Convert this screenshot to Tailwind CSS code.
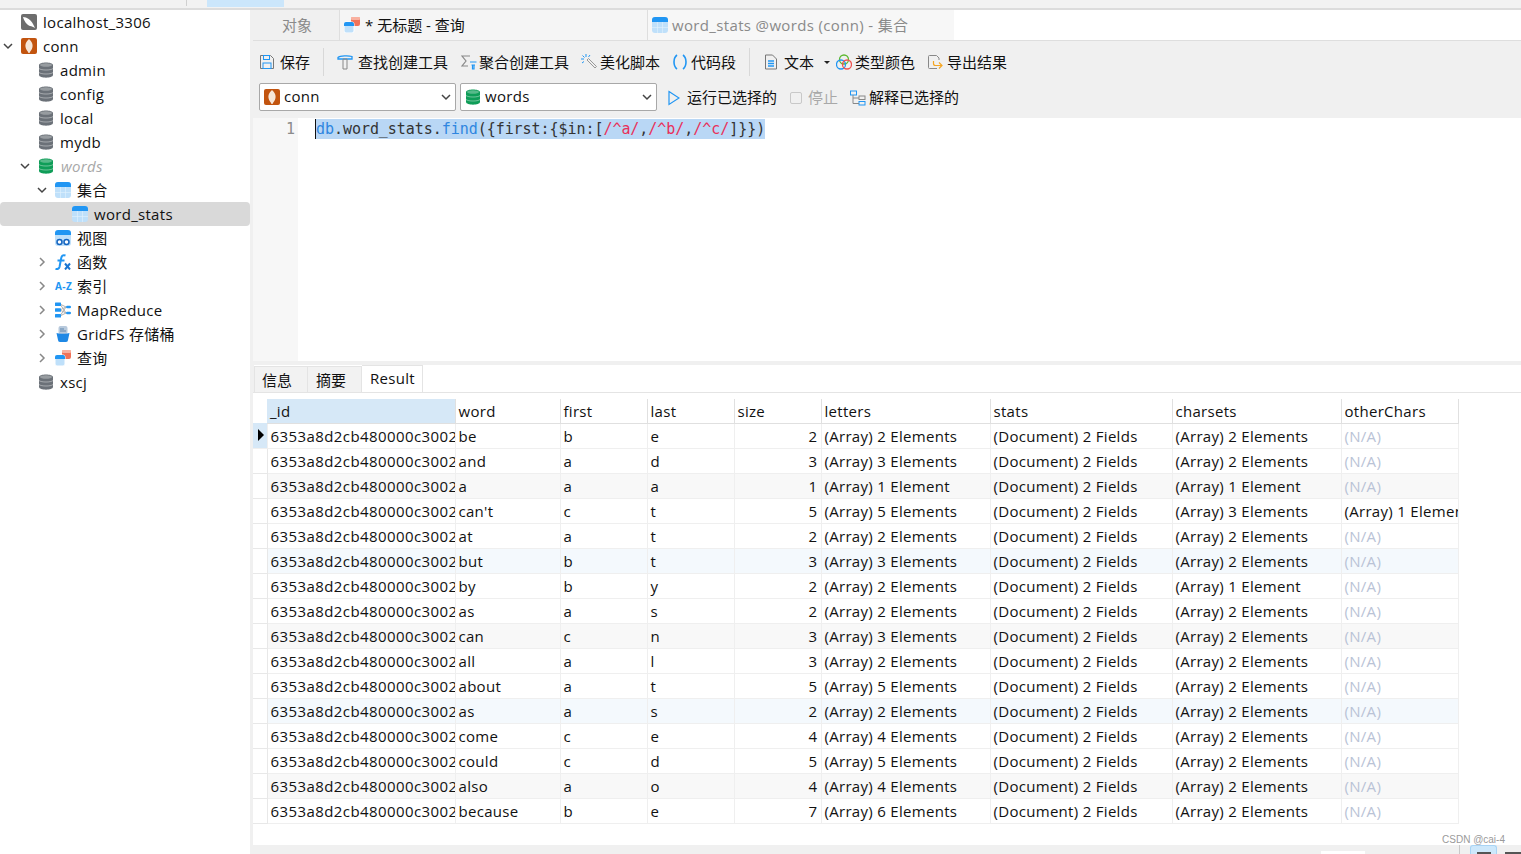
<!DOCTYPE html>
<html lang="zh-CN">
<head>
<meta charset="UTF-8">
<title>无标题 - 查询</title>
<script src="https://cdn.jsdelivr.net/npm/@tailwindcss/browser@4"></script>
</head>
<body class="w-[1521px] h-[854px] overflow-hidden bg-white text-[15px] text-[#111] font-['Open_Sans','Noto_Sans_CJK_SC',sans-serif]">

<svg class="hidden">
  <symbol id="db" viewBox="1 0 14 16"><path d="M1 3c0-3.500 14-3.500 14 0v10c0 3.500-14 3.500-14 0z" fill="currentColor"/><path d="M1 6.500c2 2 12 2 14 0M1 10.500c2 2 12 2 14 0" stroke="#fff" stroke-opacity=".4" fill="none"/><ellipse cx="8" cy="3" rx="6" ry="1.800" fill="#fff" fill-opacity=".3"/></symbol>
  <symbol id="tbl" viewBox="0 0 16 16"><rect width="16" height="16" rx="3" fill="#bfe0fa"/><path d="M0 5V3a3 3 0 0 1 3-3h10a3 3 0 0 1 3 3v2z" fill="#2196f3"/><path d="M5.500 5v11M10.500 5v11M0 10.500h16" stroke="#e3f2fd" stroke-width=".6"/></symbol>
  <symbol id="mongo" viewBox="0 0 16 16"><rect width="16" height="16" rx="2" fill="#c2540f"/><path d="M8 1c3 3 4 5 3.500 8S9 13 8.500 15h-1C7 13 5 12 4.500 9S5 4 8 1z" fill="#f6e6d8"/></symbol>
  <symbol id="qry" viewBox="0 0 16 16"><rect x="7" width="9" height="9" rx="2" fill="#f1735a"/><rect x="7" width="9" height="3" rx="1" fill="#f9b09f"/><rect y="5" width="10" height="11" rx="2" fill="#bfe0fa" stroke="#fff"/><path d="M0 9V7a2 2 0 0 1 2-2h6a2 2 0 0 1 2 2v2z" fill="#2196f3"/></symbol>
  <symbol id="chev-d" viewBox="0 0 12 12"><path d="M2 4l4 4 4-4" fill="none" stroke="#444" stroke-width="1.500"/></symbol>
  <symbol id="chev-r" viewBox="0 0 12 12"><path d="M4 2l4 4-4 4" fill="none" stroke="#888" stroke-width="1.500"/></symbol>
</svg>

<!-- top strip -->
<div class="h-[10px] bg-[#f2f2f2] border-b-2 border-[#dcdcdc] flex">
  <div class="ml-[186px] w-px h-[6px] bg-[#d0d0d0]"></div>
  <div class="ml-[20px] w-[77px] h-[7px] bg-[#cbe6fb]"></div>
</div>

<div class="flex h-[844px]">
  <!-- sidebar tree -->
  <aside class="w-[250px] shrink-0 bg-white tracking-[0.3px]">
    <div class="h-6 flex items-center pl-[21px] gap-[6px]"><svg class="w-4 h-4" viewBox="0 0 16 16"><rect width="16" height="16" rx="2" fill="#6d6d6d"/><path d="M2 3c4 0 8 3 10 7l2 4c-2-1-3-2-5-2-3-1-6-5-7-9z" fill="#fff"/></svg><span>localhost_3306</span></div>
    <div class="h-6 flex items-center pl-[2px] gap-[6px]"><svg class="w-3 h-3"><use href="#chev-d"/></svg><svg class="w-4 h-4 ml-[1px]"><use href="#mongo"/></svg><span>conn</span></div>
    <div class="h-6 flex items-center pl-[39px] gap-[7px]"><svg class="w-[14px] h-4 text-[#6b7178]"><use href="#db"/></svg><span>admin</span></div>
    <div class="h-6 flex items-center pl-[39px] gap-[7px]"><svg class="w-[14px] h-4 text-[#6b7178]"><use href="#db"/></svg><span>config</span></div>
    <div class="h-6 flex items-center pl-[39px] gap-[7px]"><svg class="w-[14px] h-4 text-[#6b7178]"><use href="#db"/></svg><span>local</span></div>
    <div class="h-6 flex items-center pl-[39px] gap-[7px]"><svg class="w-[14px] h-4 text-[#6b7178]"><use href="#db"/></svg><span>mydb</span></div>
    <div class="h-6 flex items-center pl-[19px] gap-[8px]"><svg class="w-3 h-3"><use href="#chev-d"/></svg><svg class="w-[14px] h-4 text-[#0f9d58]"><use href="#db"/></svg><span class="italic text-[#a8a8a8]">words</span></div>
    <div class="h-6 flex items-center pl-[36px] gap-[6px]"><svg class="w-3 h-3"><use href="#chev-d"/></svg><svg class="w-4 h-4 ml-[1px]"><use href="#tbl"/></svg><span>集合</span></div>
    <div class="h-6 flex items-center pl-[72px] gap-[6px] bg-[#d9d9d9] rounded-sm"><svg class="w-4 h-4"><use href="#tbl"/></svg><span>word_stats</span></div>
    <div class="h-6 flex items-center pl-[55px] gap-[6px]"><svg class="w-4 h-4" viewBox="0 0 16 16"><path d="M0 5V3a3 3 0 0 1 3-3h10a3 3 0 0 1 3 3v2z" fill="#2196f3"/><path d="M0 5h16v8a3 3 0 0 1-3 3H3a3 3 0 0 1-3-3z" fill="#bfe0fa"/><circle cx="4.500" cy="12" r="2.500" fill="#fff" stroke="#1565c0" stroke-width="1.500"/><circle cx="11.500" cy="12" r="2.500" fill="#fff" stroke="#1565c0" stroke-width="1.500"/></svg><span>视图</span></div>
    <div class="h-6 flex items-center pl-[36px] gap-[6px]"><svg class="w-3 h-3"><use href="#chev-r"/></svg><svg class="w-4 h-4 ml-[1px]" viewBox="0 0 16 16"><path d="M10.500 1.500C7.500 .5 6.500 2 6 5L4.500 13C4 15 3 15.500 .5 15M2.500 6.500h7" fill="none" stroke="#2196f3" stroke-width="2"/><path d="M10 9.500l5 6M15 9.500l-5 6" stroke="#1976d2" stroke-width="2"/></svg><span>函数</span></div>
    <div class="h-6 flex items-center pl-[36px] gap-[6px]"><svg class="w-3 h-3"><use href="#chev-r"/></svg><span class="ml-[1px] w-4 text-[10px] font-bold text-[#2196f3] tracking-[0.4px] leading-none whitespace-nowrap">A-Z</span><span>索引</span></div>
    <div class="h-6 flex items-center pl-[36px] gap-[6px]"><svg class="w-3 h-3"><use href="#chev-r"/></svg><svg class="w-4 h-4 ml-[1px]" viewBox="0 0 16 16"><path d="M5 2l6 3M5 8l6-3M5 14l6-3M5 8l6 3M5 2l6 9M5 14l6-9" stroke="#b0b0b0" fill="none"/><rect y=".5" width="6" height="3.500" rx=".5" fill="#2196f3"/><rect y="6.200" width="6" height="3.500" rx=".5" fill="#2196f3"/><rect y="12" width="6" height="3.500" rx=".5" fill="#2196f3"/><rect x="11" y="3.800" width="5" height="2.500" rx="1.200" fill="#2196f3"/><rect x="11" y="9.800" width="5" height="2.500" rx="1.200" fill="#2196f3"/></svg><span>MapReduce</span></div>
    <div class="h-6 flex items-center pl-[36px] gap-[6px]"><svg class="w-3 h-3"><use href="#chev-r"/></svg><svg class="w-4 h-4 ml-[1px]" viewBox="0 0 16 16"><rect x="3.500" y="0" width="9" height="8" rx="2" fill="#b7c9dc"/><path d="M5 3h4M5 5h6" stroke="#5f86ad"/><path d="M1.500 7c2 1 11 1 13 0l-1.500 7a2 2 0 0 1-2 2H5a2 2 0 0 1-2-2z" fill="#1e88e5"/></svg><span>GridFS 存储桶</span></div>
    <div class="h-6 flex items-center pl-[36px] gap-[6px]"><svg class="w-3 h-3"><use href="#chev-r"/></svg><svg class="w-4 h-4 ml-[1px]"><use href="#qry"/></svg><span>查询</span></div>
    <div class="h-6 flex items-center pl-[39px] gap-[7px]"><svg class="w-[14px] h-4 text-[#6b7178]"><use href="#db"/></svg><span>xscj</span></div>
  </aside>

  <!-- main -->
  <main class="flex-1 min-w-0 flex flex-col bg-[#f0f0f0] pl-[3px]">
    <!-- tabs -->
    <div class="h-[31px] flex bg-white border-b border-[#dedede]">
      <div class="w-[87px] bg-[#f0f0f0] flex items-center justify-center pl-[2px] text-[#8a8a8a] border-r border-[#dedede]">对象</div>
      <div class="w-[308px] bg-[#f5f5f5] flex items-center pl-[4px] gap-[5px] border-r border-[#dedede]"><svg class="w-4 h-4"><use href="#qry"/></svg><span>* 无标题 - 查询</span></div>
      <div class="w-[306px] bg-[#f7f7f7] flex items-center pl-[4px] gap-[4px] text-[#8a8a8a] tracking-[0.35px]"><svg class="w-4 h-4"><use href="#tbl"/></svg><span>word_stats @words (conn) - 集合</span></div>
    </div>

    <!-- toolbar row 1 -->
    <div class="h-[42px] flex items-center whitespace-nowrap">
      <div class="flex items-center gap-[5px] ml-[6px]"><svg class="w-4 h-4" viewBox="0 0 16 16" fill="none" stroke="#777"><path d="M1.500 1.500h10l3 3v10h-13z"/><rect x="4.500" y="1.500" width="6" height="4" stroke="#2196f3"/><rect x="4" y="9" width="8" height="5.500" stroke="#2196f3"/></svg><span>保存</span></div>
      <div class="w-px h-7 bg-[#d8d8d8] mx-[13px]"></div>
      <div class="flex items-center gap-[5px]"><svg class="w-4 h-4" viewBox="0 0 16 16" fill="none"><path d="M1 3.500C3 1.500 12 1.500 15 2.500V5H1z" stroke="#2196f3" stroke-width="1.300"/><path d="M6 5h4v10H6z" stroke="#888"/></svg><span>查找创建工具</span></div>
      <div class="flex items-center gap-[2px] ml-[13px]"><svg class="w-4 h-4" viewBox="0 0 16 16" fill="none"><path d="M9 2H1l4 5-4 5h6" stroke="#888" stroke-width="1.200"/><path d="M9 8h6.500M10.500 11h3.500M11.500 11v4h1.500v-4" stroke="#2196f3" stroke-width="1.200"/></svg><span>聚合创建工具</span></div>
      <div class="flex items-center gap-[3px] ml-[12px]"><svg class="w-4 h-4" viewBox="0 0 16 16" fill="none"><path d="M6 6l8 8 1.500-1.500-8-8z" stroke="#999"/><path d="M5 0v3M0 5h3M1.500 1.500l2 2M9 1L7.500 3M1 9l2-1.500" stroke="#2196f3"/></svg><span>美化脚本</span></div>
      <div class="flex items-center gap-[3px] ml-[12px]"><svg class="w-4 h-4" viewBox="0 0 16 16" fill="none" stroke="#2196f3" stroke-width="1.600"><path d="M5 1C1 4 1 12 5 15M11 1c4 3 4 11 0 14"/></svg><span>代码段</span></div>
      <div class="w-px h-7 bg-[#d8d8d8] mx-[13px]"></div>
      <div class="flex items-center gap-[5px]"><svg class="w-4 h-4" viewBox="0 0 16 16" fill="none"><path d="M2.500 1h7l4 4v10h-11z" stroke="#777"/><path d="M5 7h6M5 9.500h6M5 12h6" stroke="#2196f3" stroke-width="1.300"/></svg><span>文本</span><span class="ml-[5px] w-0 h-0 border-x-[3px] border-x-transparent border-t-[3px] border-t-[#222]"></span></div>
      <div class="flex items-center gap-[3px] ml-[6px]"><svg class="w-4 h-4" viewBox="0 0 16 16" fill="none"><circle cx="8" cy="5.500" r="4.500" stroke="#5cb82e" stroke-width="1.300"/><circle cx="5" cy="10.500" r="4.500" stroke="#2196f3" stroke-width="1.300"/><circle cx="11" cy="10.500" r="4.500" stroke="#ef5350" stroke-width="1.300"/></svg><span>类型颜色</span></div>
      <div class="flex items-center gap-[4px] ml-[12px]"><svg class="w-4 h-4" viewBox="0 0 16 16" fill="none"><path d="M10 14.500H2.500a1 1 0 0 1-1-1V2.500a1 1 0 0 1 1-1h7l2.500 2.500v2" stroke="#888"/><path d="M6.500 7v2.500a2 2 0 0 0 2 2h6M12 8.500l3 3-3 3" stroke="#f5a623" stroke-width="1.200"/></svg><span>导出结果</span></div>
    </div>

    <!-- toolbar row 2 -->
    <div class="h-[35px] flex items-start whitespace-nowrap">
      <div class="ml-[6px] w-[197px] h-7 bg-white border border-[#a8a8a8] rounded-[2px] flex items-center pl-[4px] gap-[4px] tracking-[0.3px]"><svg class="w-4 h-4"><use href="#mongo"/></svg><span class="flex-1 pb-[1px]">conn</span><svg class="w-3 h-3 mr-[3px]"><use href="#chev-d"/></svg></div>
      <div class="ml-[4px] w-[197px] h-7 bg-white border border-[#a8a8a8] rounded-[2px] flex items-center pl-[5px] gap-[5px] tracking-[0.3px]"><svg class="w-[14px] h-4 text-[#0f9d58]"><use href="#db"/></svg><span class="flex-1 pb-[1px]">words</span><svg class="w-3 h-3 mr-[3px]"><use href="#chev-d"/></svg></div>
      <div class="h-7 flex items-center ml-[11px] gap-[7px] pt-[1px]"><svg class="w-3 h-4" viewBox="0 0 12 16" fill="none"><path d="M1 1.500l10 6.500-10 6.500z" stroke="#2196f3" stroke-width="1.200"/></svg><span>运行已选择的</span></div>
      <div class="h-7 flex items-center ml-[13px] gap-[6px] pt-[1px] text-[#a8a8a8]"><span class="w-3 h-3 border border-[#c8c8c8] rounded-[2px]"></span><span>停止</span></div>
      <div class="h-7 flex items-center ml-[12px] gap-[3px] pt-[1px]"><svg class="w-4 h-4" viewBox="0 0 16 16" fill="none"><rect x=".5" y="1" width="6" height="4" stroke="#2196f3"/><rect x="9" y="6" width="6" height="3.500" stroke="#888"/><rect x="9" y="11.500" width="6" height="3.500" stroke="#2196f3"/><path d="M3 5v8.500h6M3 8h6" stroke="#888"/></svg><span>解释已选择的</span></div>
    </div>

    <!-- editor -->
    <div class="h-[243px] flex bg-white">
      <div class="w-[45px] bg-[#f7f7f7] pt-[1px] pr-[3px] text-right text-[#8c8c8c] leading-[20px] font-['DejaVu_Sans_Mono',monospace] text-[15px]">1</div>
      <div class="pl-[17px] pt-[1px]">
        <div class="h-5 bg-[#b9d7f5] border-l border-[#111] leading-5 whitespace-pre font-['DejaVu_Sans_Mono',monospace] text-[15px] tracking-[-0.05px] text-[#333]"><span class="text-[#2f86e0]">db</span>.word_stats.<span class="text-[#2f86e0]">find</span>({first:{$in:[<span class="text-[#e8305a]">/^a/</span>,<span class="text-[#e8305a]">/^b/</span>,<span class="text-[#e8305a]">/^c/</span>]}})</div>
      </div>
    </div>

    <!-- result tabs -->
    <div class="h-[4px]"></div>
    <div class="h-[28px] flex bg-white border-b border-[#e4e4e4] items-end">
      <div class="w-[1px] h-full bg-[#f0f0f0]"></div>
      <div class="w-[54px] h-[26px] flex items-center pl-[7px] pt-[1px] bg-[#f2f2f2] border border-b-0 border-[#e4e4e4]">信息</div>
      <div class="w-[54px] h-[26px] flex items-center pl-[8px] pt-[1px] bg-[#f2f2f2] border-t border-r border-[#e4e4e4]">摘要</div>
      <div class="w-[61px] h-[27px] flex items-center pl-[8px] pb-[2px] bg-white border-t border-r border-[#e4e4e4] tracking-[0.3px]">Result</div>
    </div>

    <!-- result grid -->
    <div class="flex-1 min-h-0 bg-white pt-[6px] relative">
      <table class="table-fixed border-collapse w-[1205px] whitespace-nowrap tracking-[0.3px]">
        <colgroup>
          <col class="w-[14px]"><col class="w-[188px]"><col class="w-[105px]"><col class="w-[87px]"><col class="w-[87px]"><col class="w-[87px]"><col class="w-[169px]"><col class="w-[182px]"><col class="w-[169px]"><col class="w-[117px]">
        </colgroup>
        <thead>
          <tr class="h-[24px] text-left">
            <th class="p-0"></th>
            <th class="p-0 pt-[1px] pl-[3px] font-normal bg-[#d6e8f7] border-b border-r border-[#e0e0e0]">_id</th>
            <th class="p-0 pt-[1px] pl-[3px] font-normal border-b border-r border-[#e0e0e0]">word</th>
            <th class="p-0 pt-[1px] pl-[3px] font-normal border-b border-r border-[#e0e0e0]">first</th>
            <th class="p-0 pt-[1px] pl-[3px] font-normal border-b border-r border-[#e0e0e0]">last</th>
            <th class="p-0 pt-[1px] pl-[3px] font-normal border-b border-r border-[#e0e0e0]">size</th>
            <th class="p-0 pt-[1px] pl-[3px] font-normal border-b border-r border-[#e0e0e0]">letters</th>
            <th class="p-0 pt-[1px] pl-[3px] font-normal border-b border-r border-[#e0e0e0]">stats</th>
            <th class="p-0 pt-[1px] pl-[3px] font-normal border-b border-r border-[#e0e0e0]">charsets</th>
            <th class="p-0 pt-[1px] pl-[3px] font-normal border-b border-r border-[#e0e0e0]">otherChars</th>
          </tr>
        </thead>
        <tbody id="rows"></tbody>
      </table>
      <span class="absolute right-[16px] bottom-0 text-[10px] leading-none text-[#9a9a9a] font-['Liberation_Sans',sans-serif]">CSDN @cai-4</span>
    </div>

    <!-- status bar -->
    <div class="h-[9px] shrink-0 bg-[#f0f0f0] flex">
      <div class="ml-[1068px] w-[44px] h-[3px] mt-[6px] bg-white"></div>
      <div class="ml-[94px] w-px h-full bg-[#c8c8c8]"></div>
      <div class="ml-[10px] w-[27px] h-full bg-[#cde8fb] border-t border-x border-[#a8d4f5] rounded-t-[3px] flex justify-center items-end"><div class="w-[14px] h-[2px] bg-[#555]"></div></div>
      <div class="ml-[8px] w-4 h-[2px] mt-[7px] bg-[#555]"></div>
    </div>
  </main>
</div>

<script>
  // word, first, last, size, letters, charsets, otherChars
  const data = [
    ['be','b','e',2,'2 Elements','2 Elements'],
    ['and','a','d',3,'3 Elements','2 Elements'],
    ['a','a','a',1,'1 Element','1 Element'],
    ["can't",'c','t',5,'5 Elements','3 Elements','(Array) 1 Element'],
    ['at','a','t',2,'2 Elements','2 Elements'],
    ['but','b','t',3,'3 Elements','2 Elements'],
    ['by','b','y',2,'2 Elements','1 Element'],
    ['as','a','s',2,'2 Elements','2 Elements'],
    ['can','c','n',3,'3 Elements','2 Elements'],
    ['all','a','l',3,'2 Elements','2 Elements'],
    ['about','a','t',5,'5 Elements','2 Elements'],
    ['as','a','s',2,'2 Elements','2 Elements'],
    ['come','c','e',4,'4 Elements','2 Elements'],
    ['could','c','d',5,'5 Elements','2 Elements'],
    ['also','a','o',4,'4 Elements','2 Elements'],
    ['because','b','e',7,'6 Elements','2 Elements'],
  ];
  const td = 'p-0 pt-[1px] pl-[3px] border-b border-r border-[#efefef] overflow-hidden';
  document.getElementById('rows').innerHTML = data.map((r, i) => {
    const bg = i % 6 === 5 ? 'bg-[#f4f9fd]' : i % 6 === 2 ? 'bg-[#f8f8f8]' : 'bg-white';
    const marker = i === 0
      ? '<td class="p-0 bg-[#d6e8f7] border-b border-r border-[#efefef]"><span class="block ml-[5px] w-0 h-0 border-y-[6px] border-y-transparent border-l-[6px] border-l-black"></span></td>'
      : '<td class="p-0 bg-white border-b border-r border-[#e8e8e8]"></td>';
    const other = r[6] ? `<td class="${td}">${r[6]}</td>` : `<td class="${td} text-[#b9c3d6]">(N/A)</td>`;
    return `<tr class="h-[25px] ${bg}">${marker}`
      + `<td class="${td} tracking-[0.42px]">6353a8d2cb480000c3002a1f</td>`
      + `<td class="${td}">${r[0]}</td><td class="${td}">${r[1]}</td><td class="${td}">${r[2]}</td>`
      + `<td class="${td} pr-[3px] text-right">${r[3]}</td>`
      + `<td class="${td}">(Array) ${r[4]}</td><td class="${td}">(Document) 2 Fields</td>`
      + `<td class="${td}">(Array) ${r[5]}</td>${other}</tr>`;
  }).join('');
</script>
</body>
</html>
